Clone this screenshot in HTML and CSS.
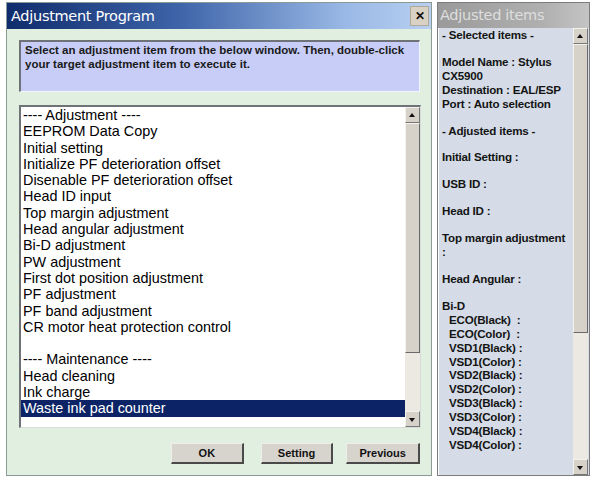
FILE: index.html
```html
<!DOCTYPE html>
<html lang="en">

<head>
    <meta charset="UTF-8">
    <title>Adjustment Program</title>
    <link rel="stylesheet" href="styles.css">
</head>

<body>
    <section class="window">
        <div class="titlebar">
            <span class="title">Adjustment Program</span>
            <span class="close">&#x2715;</span>
        </div>
        <div class="client">
            <div class="hint">Select an adjustment item from the below window. Then, double-click your target adjustment item to execute it.</div>
            <div class="listbox">
                <ul class="items">
                    <li>---- Adjustment ----</li>
                    <li>EEPROM Data Copy</li>
                    <li>Initial setting</li>
                    <li>Initialize PF deterioration offset</li>
                    <li>Disenable PF deterioration offset</li>
                    <li>Head ID input</li>
                    <li>Top margin adjustment</li>
                    <li>Head angular adjustment</li>
                    <li>Bi-D adjustment</li>
                    <li>PW adjustment</li>
                    <li>First dot position adjustment</li>
                    <li>PF adjustment</li>
                    <li>PF band adjustment</li>
                    <li>CR motor heat protection control</li>
                    <li>&nbsp;</li>
                    <li>---- Maintenance ----</li>
                    <li>Head cleaning</li>
                    <li>Ink charge</li>
                    <li class="selected">Waste ink pad counter</li>
                </ul>
                <div class="scroll list-scroll">
                    <div class="arrow up"></div>
                    <div class="track"><div class="thumb"></div></div>
                    <div class="arrow down"></div>
                </div>
            </div>
            <div class="buttons">
                <div class="btn">OK</div>
                <div class="btn btn-setting">Setting</div>
                <div class="btn btn-prev">Previous</div>
            </div>
        </div>
    </section>

    <aside class="side">
        <div class="side-title">Adjusted items</div>
        <div class="side-body">
            <div class="side-text">
                <p>- Selected items -</p>
                <p class="gap">Model Name : Stylus<br>CX5900<br>Destination : EAL/ESP<br>Port : Auto selection</p>
                <p class="gap">- Adjusted items -</p>
                <p class="gap">Initial Setting :</p>
                <p class="gap">USB ID :</p>
                <p class="gap">Head ID :</p>
                <p class="gap">Top margin adjustment<br>:</p>
                <p class="gap">Head Angular :</p>
                <p class="gap">Bi-D</p>
                <p class="indent">ECO(Black)&nbsp; :<br>ECO(Color)&nbsp; :<br>VSD1(Black) :<br>VSD1(Color) :<br>VSD2(Black) :<br>VSD2(Color) :<br>VSD3(Black) :<br>VSD3(Color) :<br>VSD4(Black) :<br>VSD4(Color) :</p>
            </div>
            <div class="scroll side-scroll">
                <div class="arrow up"></div>
                <div class="track"><div class="thumb"></div></div>
                <div class="arrow down"></div>
            </div>
        </div>
    </aside>
</body>

</html>
```

FILE: styles.css
```css
* {
    padding: 0;
    margin: 0;
    box-sizing: border-box;
}

body {
    width: 600px;
    height: 480px;
    background: #fff;
    padding: 2px 0 0 6px;
    display: flex;
    gap: 5px;
    font-family: "Liberation Sans", Arial, sans-serif;
    color: #000;
    overflow: hidden;
}

/* 主窗口 */
.window {
    width: 426px;
    height: 474px;
    border: 1px solid #8a9a96;
    background: #e1efe1;
    display: flex;
    flex-direction: column;
}

.titlebar {
    height: 26px;
    background: linear-gradient(to right, #0f2c6c 0%, #3d63a8 40%, #9ab9e6 80%, #b8cff0 100%);
    display: flex;
    align-items: center;
    justify-content: space-between;
    padding: 0 2px 0 4px;
}

.title {
    font-family: "DejaVu Sans", Verdana, sans-serif;
    font-size: 14.5px;
    letter-spacing: -0.3px;
    color: #fff;
}

.close {
    width: 19px;
    height: 20px;
    background: #d9d2c4;
    border: 1px solid #b0a898;
    font-size: 12px;
    font-weight: bold;
    text-align: center;
    line-height: 18px;
    color: #111;
}

.client {
    flex: 1;
    padding: 11px 11px 0 12px;
    display: flex;
    flex-direction: column;
}

.hint {
    width: 401px;
    height: 52px;
    background: #c7cdf6;
    border-top: 2px solid #6f7378;
    border-left: 2px solid #6f7378;
    border-right: 1px solid #f4f6ff;
    border-bottom: 1px solid #f4f6ff;
    padding: 1px 4px 0 4px;
    font-size: 11.5px;
    font-weight: bold;
    line-height: 14px;
    color: #1a1a1a;
}

/* 列表 */
.listbox {
    margin-top: 13px;
    width: 402px;
    height: 323px;
    background: #fff;
    border-top: 2px solid #6f7378;
    border-left: 2px solid #6f7378;
    border-right: 1px solid #d8dcd8;
    border-bottom: 1px solid #d8dcd8;
    display: flex;
}

.items {
    flex: 1;
    list-style: none;
    font-size: 14.4px;
    line-height: 16.3px;
}

.items li {
    padding-left: 2px;
    white-space: nowrap;
}

.items li.selected {
    background: #0c2466;
    color: #fff;
}

/* 滚动条 */
.scroll {
    width: 15px;
    display: flex;
    flex-direction: column;
    background: #ebe9e1;
}

.arrow {
    height: 16px;
    background: #d6d2ca;
    border: 1px solid #777;
    border-top-color: #f4f2ec;
    border-left-color: #f4f2ec;
    position: relative;
}

.arrow::after {
    content: "";
    position: absolute;
    left: 3px;
    width: 0;
    height: 0;
    border-left: 3.5px solid transparent;
    border-right: 3.5px solid transparent;
}

.arrow.up::after {
    top: 5px;
    border-bottom: 4px solid #111;
}

.arrow.down::after {
    top: 6px;
    border-top: 4px solid #111;
}

.track {
    flex: 1;
}

.thumb {
    background: #d6d2ca;
    border: 1px solid #6a6a6a;
    border-top-color: #f4f2ec;
    border-left-color: #f4f2ec;
}

.list-scroll .thumb {
    height: 230px;
}

.buttons {
    margin-top: 15px;
    display: flex;
    padding-left: 152px;
}

.btn {
    width: 74px;
    height: 21px;
    background: #d7d3cd;
    border: 2px solid #4a4a4a;
    border-top: 1px solid #f0eee8;
    border-left: 1px solid #f0eee8;
    font-size: 11px;
    font-weight: bold;
    text-align: center;
    line-height: 18px;
    color: #111;
}

.btn-setting {
    margin-left: 17px;
}

.btn-prev {
    margin-left: 13px;
    width: 75px;
}

/* 右侧面板 */
.side {
    width: 153px;
    height: 474px;
    border: 1px solid #7c7c7c;
    background: #d4d0c8;
    display: flex;
    flex-direction: column;
}

.side-title {
    height: 25px;
    background: linear-gradient(to right, #9a9a9a, #b0b0b0 70%, #c4c4c4);
    font-family: "DejaVu Sans", Verdana, sans-serif;
    font-size: 14.5px;
    letter-spacing: -0.3px;
    color: #dedede;
    line-height: 25px;
    padding-left: 2px;
}

.side-body {
    flex: 1;
    display: flex;
    background: #d5dce7;
    border-left: 1px solid #fff;
    min-height: 0;
}

.side-text {
    flex: 1;
    padding: 0 0 0 3px;
    font-size: 11.6px;
    font-weight: bold;
    line-height: 13.9px;
    color: #141414;
    letter-spacing: -0.2px;
    white-space: nowrap;
}

.side-text .gap {
    margin-top: 13px;
}

.side-text .indent {
    padding-left: 7px;
}

.side-scroll {
    margin-right: 1px;
}

.side-scroll .thumb {
    height: 289px;
}
```
